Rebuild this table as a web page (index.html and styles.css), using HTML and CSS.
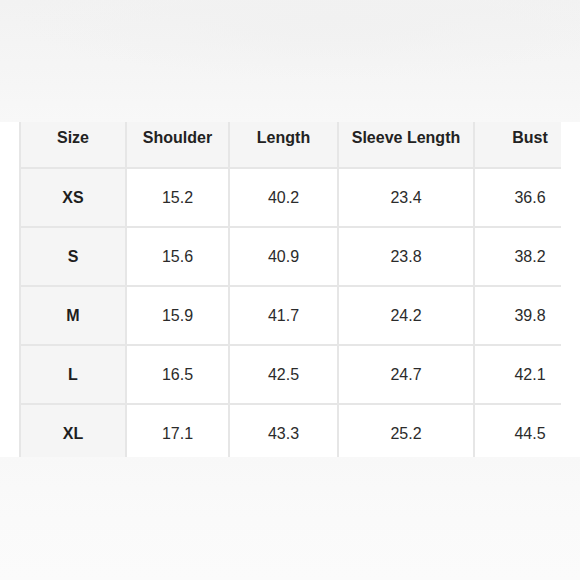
FILE: index.html
```html
<!DOCTYPE html>
<html>
<head>
<meta charset="utf-8">
<link rel="stylesheet" href="styles.css">
</head>
<body>
<div class="band band-top"></div>
<div class="mid">
  <div class="clip">
    <div class="chart">
      <div class="cell head">Size</div>
      <div class="cell head">Shoulder</div>
      <div class="cell head">Length</div>
      <div class="cell head">Sleeve Length</div>
      <div class="cell head">Bust</div>

      <div class="cell size">XS</div><div class="cell">15.2</div><div class="cell">40.2</div><div class="cell">23.4</div><div class="cell">36.6</div>
      <div class="cell size">S</div><div class="cell">15.6</div><div class="cell">40.9</div><div class="cell">23.8</div><div class="cell">38.2</div>
      <div class="cell size">M</div><div class="cell">15.9</div><div class="cell">41.7</div><div class="cell">24.2</div><div class="cell">39.8</div>
      <div class="cell size">L</div><div class="cell">16.5</div><div class="cell">42.5</div><div class="cell">24.7</div><div class="cell">42.1</div>
      <div class="cell size">XL</div><div class="cell">17.1</div><div class="cell">43.3</div><div class="cell">25.2</div><div class="cell">44.5</div>
    </div>
  </div>
</div>
<div class="band band-bottom"></div>
</body>
</html>
```
FILE: styles.css
```css
html, body {
  margin: 0;
  padding: 0;
  width: 580px;
  height: 580px;
  overflow: hidden;
  background: #fafafa;
  font-family: "Liberation Sans", Arial, sans-serif;
}

.band-top {
  height: 122px;
  background:
    radial-gradient(ellipse 320px 60px at 330px 18px, #f1f1f1 0%, rgba(241,241,241,0) 100%),
    linear-gradient(to bottom, #f2f2f2 0%, #f6f6f6 70%, #f8f8f8 100%);
}

.band-bottom {
  height: 123px;
  background: linear-gradient(to bottom, #f8f8f8 0%, #fafafa 50%, #fbfbfb 100%);
}

.mid {
  height: 335px;
  background: #ffffff;
  overflow: hidden;
  padding-left: 19px;
}

.clip {
  width: 542px;
  height: 335px;
  overflow: hidden;
}

.chart {
  display: grid;
  grid-template-columns: 104px 101px 107px 134px 110px;
  grid-template-rows: 59px repeat(5, 57px);
  gap: 2px;
  padding-left: 2px;
  width: max-content;
  margin-top: -14px;
  background: #e6e6e6;
}

.cell {
  display: flex;
  align-items: center;
  justify-content: center;
  background: #ffffff;
  color: #2b2b2b;
  font-size: 16px;
}

.head {
  background: #f5f5f5;
  font-weight: bold;
  color: #222222;
}

.size {
  background: #f5f5f5;
  font-weight: bold;
  color: #1e1e1e;
}
```
